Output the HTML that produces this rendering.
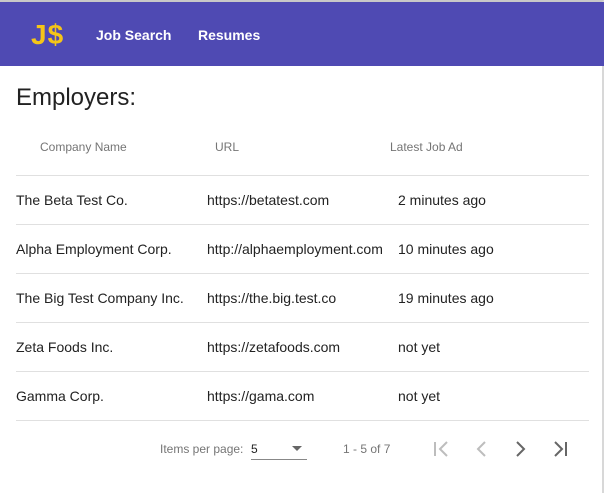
<!DOCTYPE html><html><head><style>
body{margin:0;width:606px;height:493px;overflow:hidden;background:#fff;font-family:"Liberation Sans",sans-serif;position:relative}
.frame{position:absolute;left:0;top:0;width:604px;height:493px;border-top:2px solid #c8c8c8;border-right:2px solid #d8d8d8;box-sizing:border-box}
.hdr{position:absolute;left:0;top:2px;width:604px;height:64px;background:#4f4ab3}
.logo{position:absolute;left:31px;top:17px;color:#f5c518;font-weight:bold;font-size:28px;letter-spacing:1px}
.nav{position:absolute;top:25px;color:#fff;font-weight:bold;font-size:14px}
h1{position:absolute;left:16px;top:84px;margin:0;font-size:24px;font-weight:normal;color:#222}
.th{position:absolute;top:140px;font-size:12px;color:#757575}
.line{position:absolute;left:16px;width:573px;height:1px;background:#e0e0e0}
.td{position:absolute;font-size:14px;color:#222}
.p{position:absolute;font-size:12px;color:#757575}
</style></head><body>
<div class="frame"></div>
<div class="hdr"><div class="logo">J$</div><div class="nav" style="left:96px">Job Search</div><div class="nav" style="left:198px">Resumes</div></div>
<h1>Employers:</h1>
<div class="th" style="left:40px">Company Name</div><div class="th" style="left:215px">URL</div><div class="th" style="left:390px">Latest Job Ad</div>
<div class="line" style="top:175px"></div>
<div class="td" style="left:16px;top:192px">The Beta Test Co.</div><div class="td" style="left:207px;top:192px">https://betatest.com</div><div class="td" style="left:398px;top:192px">2 minutes ago</div>
<div class="line" style="top:224px"></div>
<div class="td" style="left:16px;top:241px">Alpha Employment Corp.</div><div class="td" style="left:207px;top:241px">http://alphaemployment.com</div><div class="td" style="left:398px;top:241px">10 minutes ago</div>
<div class="line" style="top:273px"></div>
<div class="td" style="left:16px;top:290px">The Big Test Company Inc.</div><div class="td" style="left:207px;top:290px">https://the.big.test.co</div><div class="td" style="left:398px;top:290px">19 minutes ago</div>
<div class="line" style="top:322px"></div>
<div class="td" style="left:16px;top:339px">Zeta Foods Inc.</div><div class="td" style="left:207px;top:339px">https://zetafoods.com</div><div class="td" style="left:398px;top:339px">not yet</div>
<div class="line" style="top:371px"></div>
<div class="td" style="left:16px;top:388px">Gamma Corp.</div><div class="td" style="left:207px;top:388px">https://gama.com</div><div class="td" style="left:398px;top:388px">not yet</div>
<div class="line" style="top:420px"></div>
<div class="p" style="left:160px;top:442px">Items per page:</div>
<div class="p" style="left:251px;top:442px;color:#222">5</div>
<div style="position:absolute;left:251px;top:459px;width:56px;height:1px;background:#888"></div>
<svg style="position:absolute;left:292px;top:446px" width="10" height="6"><path d="M0 0h10L5 5z" fill="#666"/></svg>
<div class="p" style="left:343px;top:442px">1 - 5 of 7</div>
<svg style="position:absolute;left:430px;top:438px" width="150" height="22" fill="none" stroke-width="2">
<path d="M5 4v14M17 4l-7 7 7 7" stroke="#bdbdbd"/>
<path d="M55 4l-7 7 7 7" stroke="#bdbdbd"/>
<path d="M87 4l7 7-7 7" stroke="#666"/>
<path d="M125 4l7 7-7 7M136 4v14" stroke="#666"/>
</svg>
</body></html>
